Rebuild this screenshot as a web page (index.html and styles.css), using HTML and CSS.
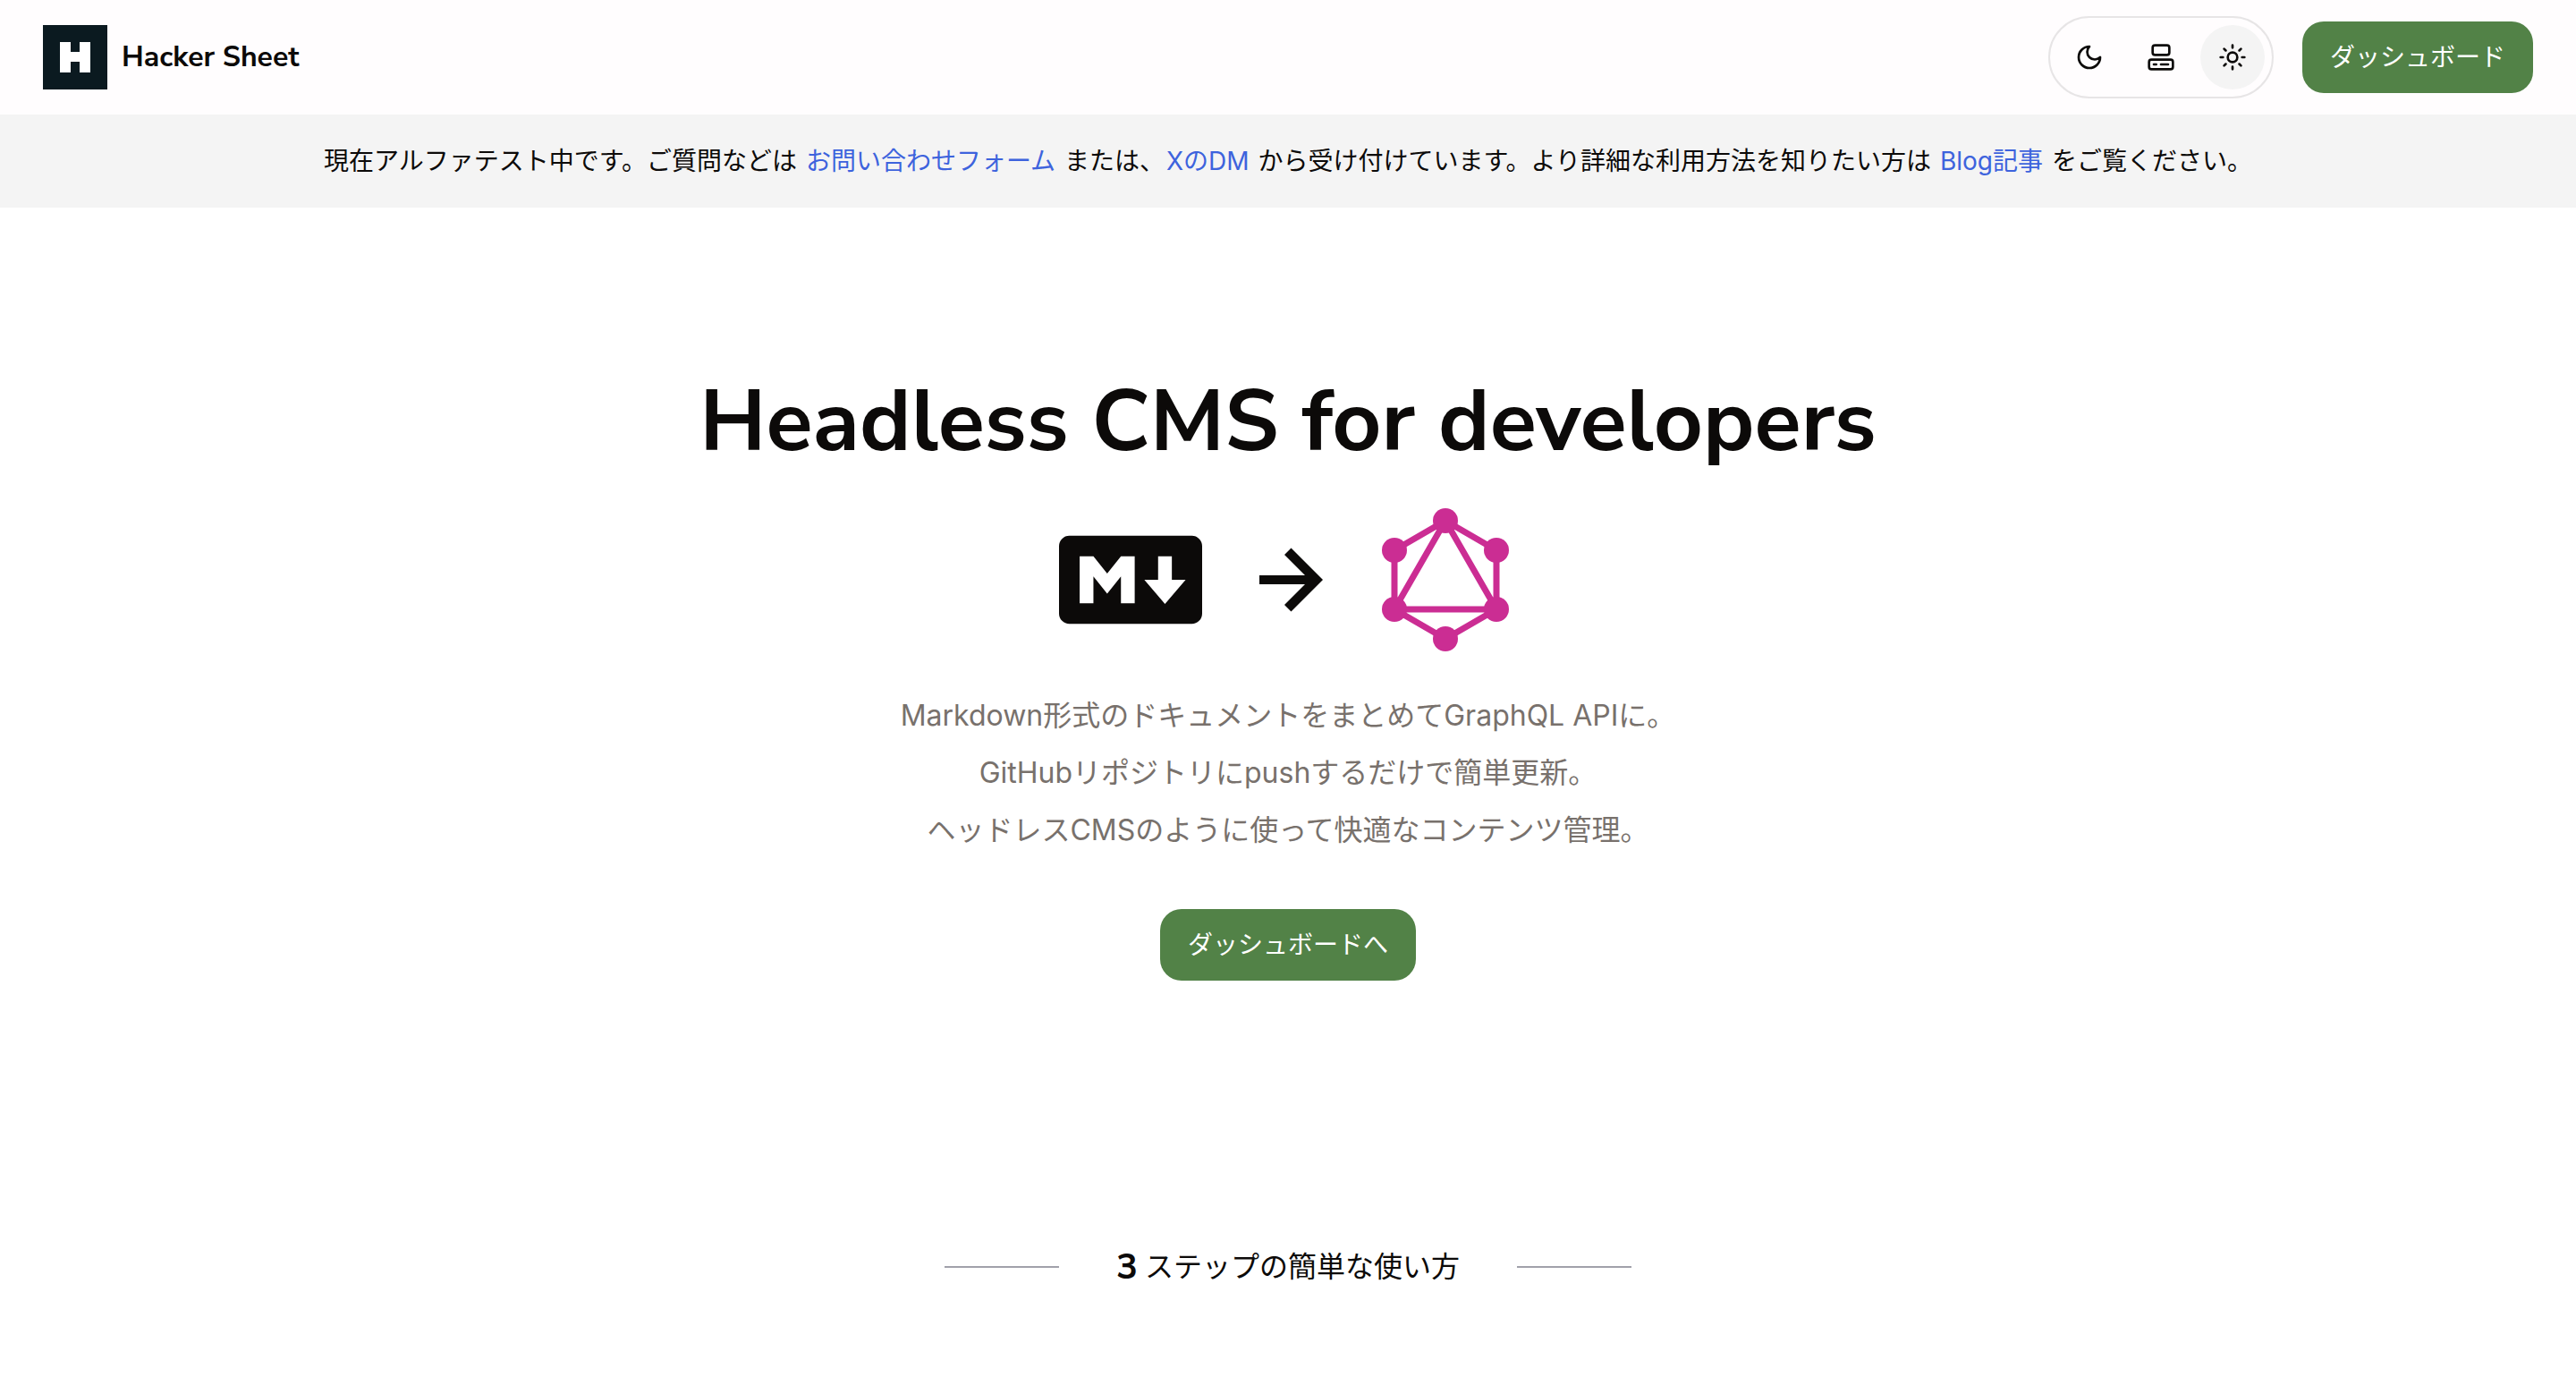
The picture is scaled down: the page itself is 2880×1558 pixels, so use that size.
FILE: index.html
```html
<!DOCTYPE html>
<html lang="ja">
<head>
<meta charset="utf-8">
<title>Hacker Sheet</title>
<meta name="viewport" content="width=device-width, initial-scale=1">
<link rel="stylesheet" href="styles.css">
</head>
<body>
<header class="header">
  <a class="brand" href="/">
    <svg class="brand-logo" viewBox="0 0 72 72" aria-hidden="true"><rect width="72" height="72" fill="#0b1a20"/><path fill="#fff" d="M19 19h12v11h10V19h12v34H41V41H31v12H19z"/></svg>
    <span class="brand-name">Hacker Sheet</span>
  </a>
  <div class="header-actions">
    <div class="theme" role="group" aria-label="テーマ">
      <button class="theme-button" type="button" aria-label="ダーク">
        <svg class="theme-icon" viewBox="0 0 24 24"><path d="M12 3a6 6 0 0 0 9 9 9 9 0 1 1-9-9Z"/></svg>
      </button>
      <button class="theme-button" type="button" aria-label="システム">
        <svg class="theme-icon" viewBox="0 0 24 24"><rect x="5" y="2" width="14" height="8" rx="2"/><rect x="2" y="14" width="20" height="8" rx="2"/><path d="M6 18h2M12 18h6"/></svg>
      </button>
      <button class="theme-button theme-button-active" type="button" aria-label="ライト" aria-pressed="true">
        <svg class="theme-icon" viewBox="0 0 24 24"><circle cx="12" cy="12" r="4"/><path d="M12 2v2M12 20v2M4.93 4.93l1.41 1.41M17.66 17.66l1.41 1.41M2 12h2M20 12h2M6.34 17.66l-1.41 1.41M19.07 4.93l-1.41 1.41"/></svg>
      </button>
    </div>
    <a class="button" href="/dashboard">ダッシュボード</a>
  </div>
</header>
<p class="notice">現在アルファテスト中です。ご質問などは <a href="#contact">お問い合わせフォーム</a> または、<a href="#dm">XのDM</a> から受け付けています。より詳細な利用方法を知りたい方は <a href="#blog">Blog記事</a> をご覧ください。</p>
<main>
  <section class="hero">
    <h1 class="hero-title">Headless CMS for developers</h1>
    <div class="flow">
      <svg class="flow-logo" viewBox="0 0 24 24" role="img" aria-label="Markdown"><path fill="#0c0a09" d="M22.27 19.385H1.73A1.73 1.73 0 0 1 0 17.655V6.345a1.73 1.73 0 0 1 1.73-1.73h20.54A1.73 1.73 0 0 1 24 6.345v11.308a1.73 1.73 0 0 1-1.73 1.731zM5.769 15.923v-4.5l2.308 2.885 2.307-2.885v4.5h2.308V8.078h-2.308l-2.307 2.885-2.308-2.885H3.46v7.847zM21.232 12h-2.309V8.077h-2.307V12h-2.308l3.461 4.039z"/></svg>
      <svg class="flow-arrow" viewBox="0 0 96 96" aria-hidden="true"><path fill="#0c0a09" d="M16 43h51L44 20l7.5-7.5L87 48 51.5 83.5 44 76l23-23H16z"/></svg>
      <svg class="flow-logo" viewBox="0 0 160 160" role="img" aria-label="GraphQL"><g fill="none" stroke="#cb2d93" stroke-width="7"><path d="M80 14l57 33v66l-57 33-57-33V47z"/><path d="M80 14l57 99H23z"/></g><g fill="#cb2d93"><circle cx="80" cy="14" r="14"/><circle cx="137" cy="47" r="14"/><circle cx="137" cy="113" r="14"/><circle cx="80" cy="146" r="14"/><circle cx="23" cy="113" r="14"/><circle cx="23" cy="47" r="14"/></g></svg>
    </div>
    <p class="hero-text">Markdown形式のドキュメントをまとめてGraphQL APIに。<br>GitHubリポジトリにpushするだけで簡単更新。<br>ヘッドレスCMSのように使って快適なコンテンツ管理。</p>
    <a class="button" href="/dashboard">ダッシュボードへ</a>
  </section>
  <section class="steps">
    <h2 class="steps-title"><span class="steps-count">3</span> ステップの簡単な使い方</h2>
  </section>
</main>
</body>
</html>
```
FILE: styles.css
```css
* {
  box-sizing: border-box;
}

body {
  margin: 0;
  background: #fff;
  color: #0c0a09;
  font-family: "Inter", "Noto Sans CJK JP", sans-serif;
  font-size: 28px;
  line-height: 40px;
}

a {
  color: inherit;
  text-decoration: none;
}

.header {
  display: flex;
  align-items: center;
  justify-content: space-between;
  min-height: 128px;
  padding: 16px 48px;
  background: #fffdfe;
}

.brand {
  display: flex;
  align-items: center;
  gap: 16px;
}

.brand-logo {
  width: 72px;
  height: 72px;
}

.brand-name {
  font-family: "Nunito Sans", "Nunito", "Open Sans", sans-serif;
  font-size: 32px;
  font-weight: 700;
}

.header-actions {
  display: flex;
  align-items: center;
  gap: 32px;
}

.theme {
  display: flex;
  gap: 8px;
  padding: 8px;
  border: 2px solid #e7e5e6;
  border-radius: 48px;
}

.theme-button {
  display: grid;
  place-items: center;
  width: 72px;
  height: 72px;
  padding: 0;
  border: 0;
  border-radius: 50%;
  background: transparent;
  color: #0c0a09;
}

.theme-button-active {
  background: #f4f4f4;
}

.theme-icon {
  width: 32px;
  height: 32px;
  fill: none;
  stroke: currentColor;
  stroke-width: 2;
  stroke-linecap: round;
  stroke-linejoin: round;
}

.button {
  display: inline-block;
  padding: 20px 31px;
  border-radius: 24px;
  background: #528247;
  color: #fff;
}

.notice {
  margin: 0;
  padding: 32px;
  background: #f4f4f4;
  text-align: center;
}

.notice a {
  margin: 0 2px;
  color: #3d63dd;
}

.hero {
  display: flex;
  flex-direction: column;
  align-items: center;
  padding: 192px 32px;
}

.hero-title {
  margin: 0;
  font-family: "Nunito Sans", "Nunito", "Open Sans", sans-serif;
  font-size: 96px;
  font-weight: 700;
  line-height: 96px;
  text-align: center;
}

.flow {
  display: flex;
  align-items: center;
  gap: 48px;
  margin-top: 48px;
}

.flow-logo {
  width: 160px;
  height: 160px;
}

.flow-arrow {
  width: 96px;
  height: 96px;
}

.hero-text {
  margin: 40px 0 56px;
  color: #78716c;
  font-size: 32px;
  line-height: 64px;
  text-align: center;
}

.steps {
  padding: 104px 32px;
}

.steps-title {
  display: flex;
  align-items: center;
  justify-content: center;
  margin: 0;
  font-size: 32px;
  font-weight: 400;
  line-height: 48px;
}

.steps-title::before,
.steps-title::after {
  content: "";
  width: 128px;
  height: 2px;
  background: #a1a1aa;
}

.steps-title::before {
  margin-right: 64px;
}

.steps-title::after {
  margin-left: 64px;
}

.steps-count {
  margin-right: 8px;
  font-family: "Nunito Sans", "Nunito", "Open Sans", sans-serif;
  font-size: 40px;
  font-weight: 700;
}
```
